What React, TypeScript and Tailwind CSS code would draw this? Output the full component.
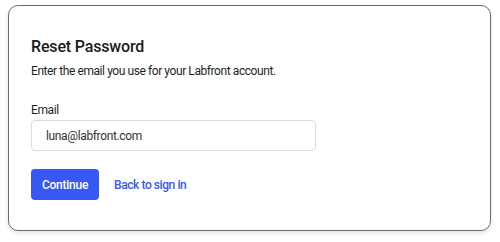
import React, { useState } from 'react';

const ResetPassword = () => {
  const [email, setEmail] = useState('luna@labfront.com');

  return (
    <div className="w-[500px] h-[242px] bg-white pt-[5px] pl-[8px] pr-[9px]" style={{ fontFamily: 'Roboto, "Noto Sans", sans-serif' }}>
      <div className="h-[226px] rounded-[10px] border-[1.5px] border-[#6b6b6b] bg-white px-[22px] pt-[30px] shadow-[0_2px_4px_rgba(0,0,0,0.12)]">
        <h2 className="text-[16px] leading-[22px] font-medium tracking-[-0.01em] text-[#1a1a1a]">Reset Password</h2>
        <p className="mt-[4px] text-[12px] leading-[18px] tracking-[-0.035em] text-[#1f1f1f]">
          Enter the email you use for your Labfront account.
        </p>

        <form className="mt-[21px]" onSubmit={(e) => e.preventDefault()}>
          <label htmlFor="email" className="block text-[12px] leading-[18px] tracking-[-0.03em] text-[#1f1f1f]">
            Email
          </label>
          <input
            id="email"
            type="email"
            value={email}
            onChange={(e) => setEmail(e.target.value)}
            className="mt-[1px] block h-[31px] w-[285px] rounded-[4px] border border-[#dcdcdc] px-[14px] text-[12px] tracking-[-0.03em] text-[#333] outline-none"
          />

          <div className="mt-[18px] flex items-center gap-[15px]">
            <button
              type="submit"
              className="h-[31px] w-[68px] rounded-[4px] bg-[#3858f5] text-[12px] font-medium tracking-[-0.02em] text-white"
            >
              Continue
            </button>
            <a href="#" className="text-[12px] font-medium tracking-[-0.035em] text-[#3858f5]">
              Back to sign in
            </a>
          </div>
        </form>
      </div>
    </div>
  );
};

export default ResetPassword;
